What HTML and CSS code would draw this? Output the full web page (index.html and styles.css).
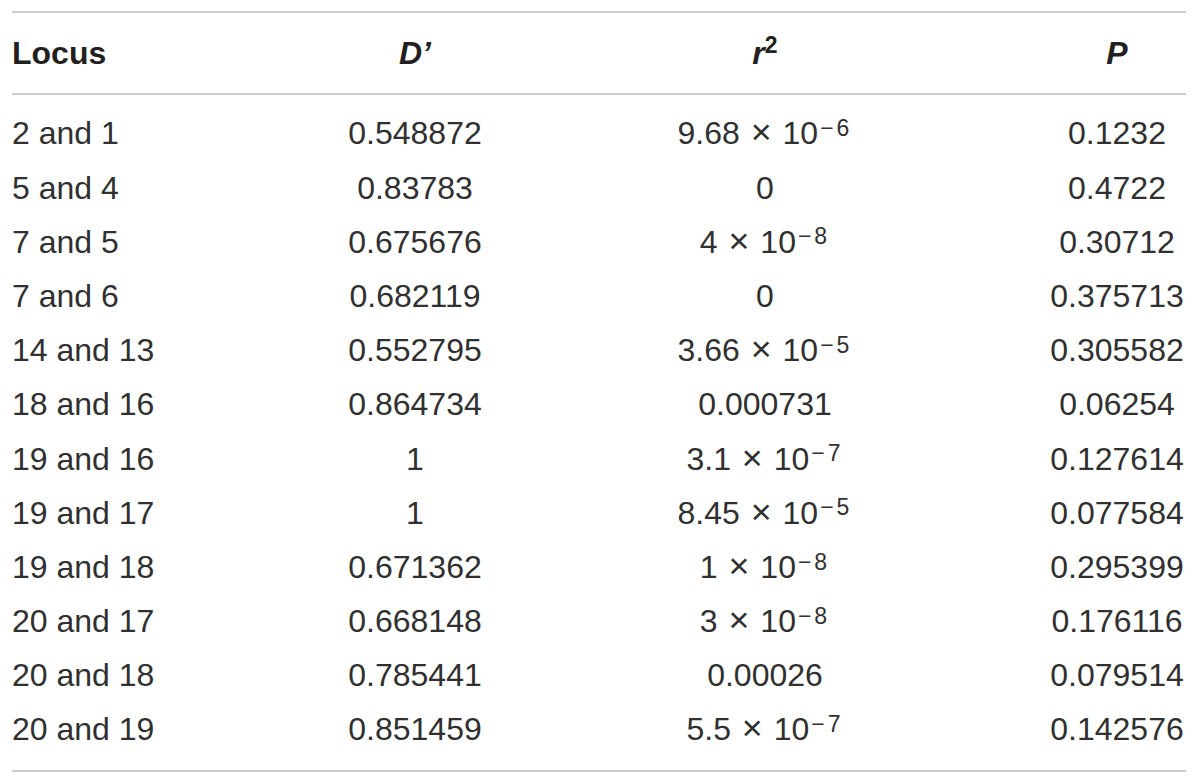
FILE: index.html
```html
<!DOCTYPE html>
<html>
<head>
<meta charset="utf-8">
<link rel="stylesheet" href="styles.css">
</head>
<body>
<table class="ld-table">
  <colgroup>
    <col class="c-locus">
    <col class="c-d">
    <col class="c-r">
    <col class="c-p">
  </colgroup>
  <thead>
    <tr>
      <th class="locus">Locus</th>
      <th><i>D’</i></th>
      <th><i>r</i><sup class="hsup">2</sup></th>
      <th class="pcol"><i>P</i></th>
    </tr>
  </thead>
  <tbody>
    <tr><td class="locus">2 and 1</td><td>0.548872</td><td class="sci">9.68 <span class="times">×</span> 10<sup>−6</sup></td><td class="pcol">0.1232</td></tr>
    <tr><td class="locus">5 and 4</td><td>0.83783</td><td class="sci">0</td><td class="pcol">0.4722</td></tr>
    <tr><td class="locus">7 and 5</td><td>0.675676</td><td class="sci">4 <span class="times">×</span> 10<sup>−8</sup></td><td class="pcol">0.30712</td></tr>
    <tr><td class="locus">7 and 6</td><td>0.682119</td><td class="sci">0</td><td class="pcol">0.375713</td></tr>
    <tr><td class="locus">14 and 13</td><td>0.552795</td><td class="sci">3.66 <span class="times">×</span> 10<sup>−5</sup></td><td class="pcol">0.305582</td></tr>
    <tr><td class="locus">18 and 16</td><td>0.864734</td><td class="sci">0.000731</td><td class="pcol">0.06254</td></tr>
    <tr><td class="locus">19 and 16</td><td>1</td><td class="sci">3.1 <span class="times">×</span> 10<sup>−7</sup></td><td class="pcol">0.127614</td></tr>
    <tr><td class="locus">19 and 17</td><td>1</td><td class="sci">8.45 <span class="times">×</span> 10<sup>−5</sup></td><td class="pcol">0.077584</td></tr>
    <tr><td class="locus">19 and 18</td><td>0.671362</td><td class="sci">1 <span class="times">×</span> 10<sup>−8</sup></td><td class="pcol">0.295399</td></tr>
    <tr><td class="locus">20 and 17</td><td>0.668148</td><td class="sci">3 <span class="times">×</span> 10<sup>−8</sup></td><td class="pcol">0.176116</td></tr>
    <tr><td class="locus">20 and 18</td><td>0.785441</td><td class="sci">0.00026</td><td class="pcol">0.079514</td></tr>
    <tr><td class="locus">20 and 19</td><td>0.851459</td><td class="sci">5.5 <span class="times">×</span> 10<sup>−7</sup></td><td class="pcol">0.142576</td></tr>
  </tbody>
</table>
</body>
</html>
```

FILE: styles.css
```css
html, body {
  margin: 0;
  padding: 0;
  background: #ffffff;
}

body {
  font-family: "Liberation Sans", Arial, sans-serif;
  color: #231f20;
}

.ld-table {
  margin: 11px 0 0 12px;
  width: 1174px;
  border-collapse: collapse;
  table-layout: fixed;
  border-top: 2px solid #cccccc;
  border-bottom: 2px solid #cccccc;
}

.c-locus { width: 228px; }
.c-d { width: 350px; }
.c-r { width: 350px; }
.c-p { width: 246px; }

.ld-table th,
.ld-table td {
  padding: 0;
  text-align: center;
  white-space: nowrap;
  font-size: 32px;
}

.ld-table th {
  height: 80px;
  line-height: 80px;
  font-weight: bold;
  border-bottom: 2px solid #cccccc;
}

.ld-table th i {
  font-style: italic;
}

.ld-table td {
  height: 54.18px;
  line-height: 54.18px;
  font-weight: normal;
  color: #303030;
}

.ld-table tbody tr:first-child td {
  padding-top: 11.4px;
}

.ld-table tbody tr:last-child td {
  padding-bottom: 13.4px;
}

.ld-table .locus {
  text-align: left;
}

.ld-table .pcol {
  padding-left: 108px;
}

.ld-table .times {
  font-size: 1.12em;
  line-height: 0;
  margin: 0 2px;
}

.ld-table sup {
  font-size: 0.72em;
  line-height: 0;
  vertical-align: 0.36em;
  margin-left: 2px;
  letter-spacing: 3px;
}

.ld-table sup.hsup {
  font-size: 0.72em;
  vertical-align: 0.48em;
  margin-left: 0;
  letter-spacing: 0;
}
```
